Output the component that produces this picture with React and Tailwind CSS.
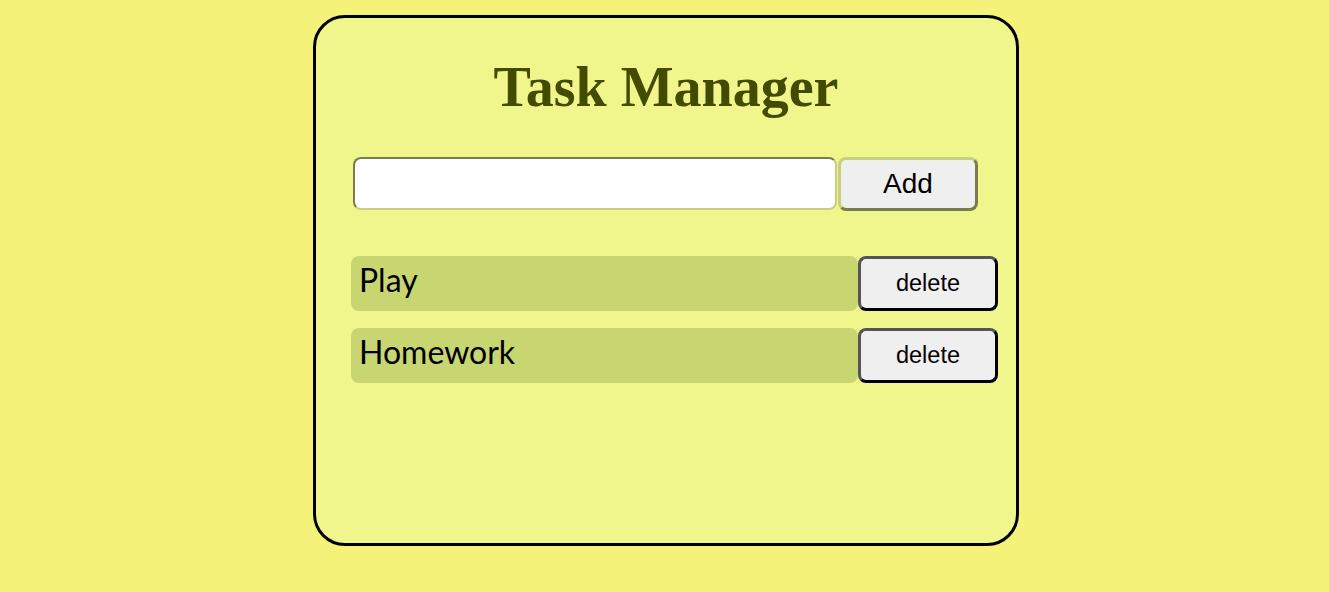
import { useState } from 'react';

const tasks = ['Play', 'Homework'];

function TaskRow({ name }) {
  return (
    <div className="flex items-stretch">
      <div className="w-[507px] h-[55px] rounded-[8px] bg-[#c8d672] pl-[8px] pt-[4px] text-[32px] leading-[40px] text-black font-['Lato',sans-serif]">
        {name}
      </div>
      <button className="w-[140px] h-[55px] rounded-[8px] border-[3px] border-[#555] border-b-black border-r-black bg-[#efefef] text-[23.5px] text-black font-['Liberation_Sans',Arial,sans-serif]">
        delete
      </button>
    </div>
  );
}

export default function App() {
  const [text, setText] = useState('');

  return (
    <div className="w-[1329px] h-[592px] bg-[#f4f279] pt-[15px]">
      <div className="ml-[313px] w-[706px] h-[531px] rounded-[32px] border-[3px] border-black bg-[#f0f68c]">
        <h1 className="pt-[37px] text-center text-[56px] leading-[64px] font-bold text-[#434b00] font-['Liberation_Serif','Times_New_Roman',serif]">
          Task Manager
        </h1>

        <div className="flex mt-[38px] ml-[37px]">
          <input
            value={text}
            onChange={(e) => setText(e.target.value)}
            className="w-[484px] h-[53px] rounded-[8px] bg-white border-2 border-[#7a7c50] border-b-[#c8d080] border-r-[#c8d080] outline-none"
          />
          <button className="ml-[1px] w-[140px] h-[54px] rounded-[8px] border-[3px] border-[#c8d080] border-b-[#7a7c50] border-r-[#7a7c50] bg-[#efefef] text-[28px] text-black font-['Liberation_Sans',Arial,sans-serif]">
            Add
          </button>
        </div>

        <div className="flex flex-col gap-[17px] mt-[45px] ml-[35px]">
          {tasks.map((t) => (
            <TaskRow key={t} name={t} />
          ))}
        </div>
      </div>
    </div>
  );
}
